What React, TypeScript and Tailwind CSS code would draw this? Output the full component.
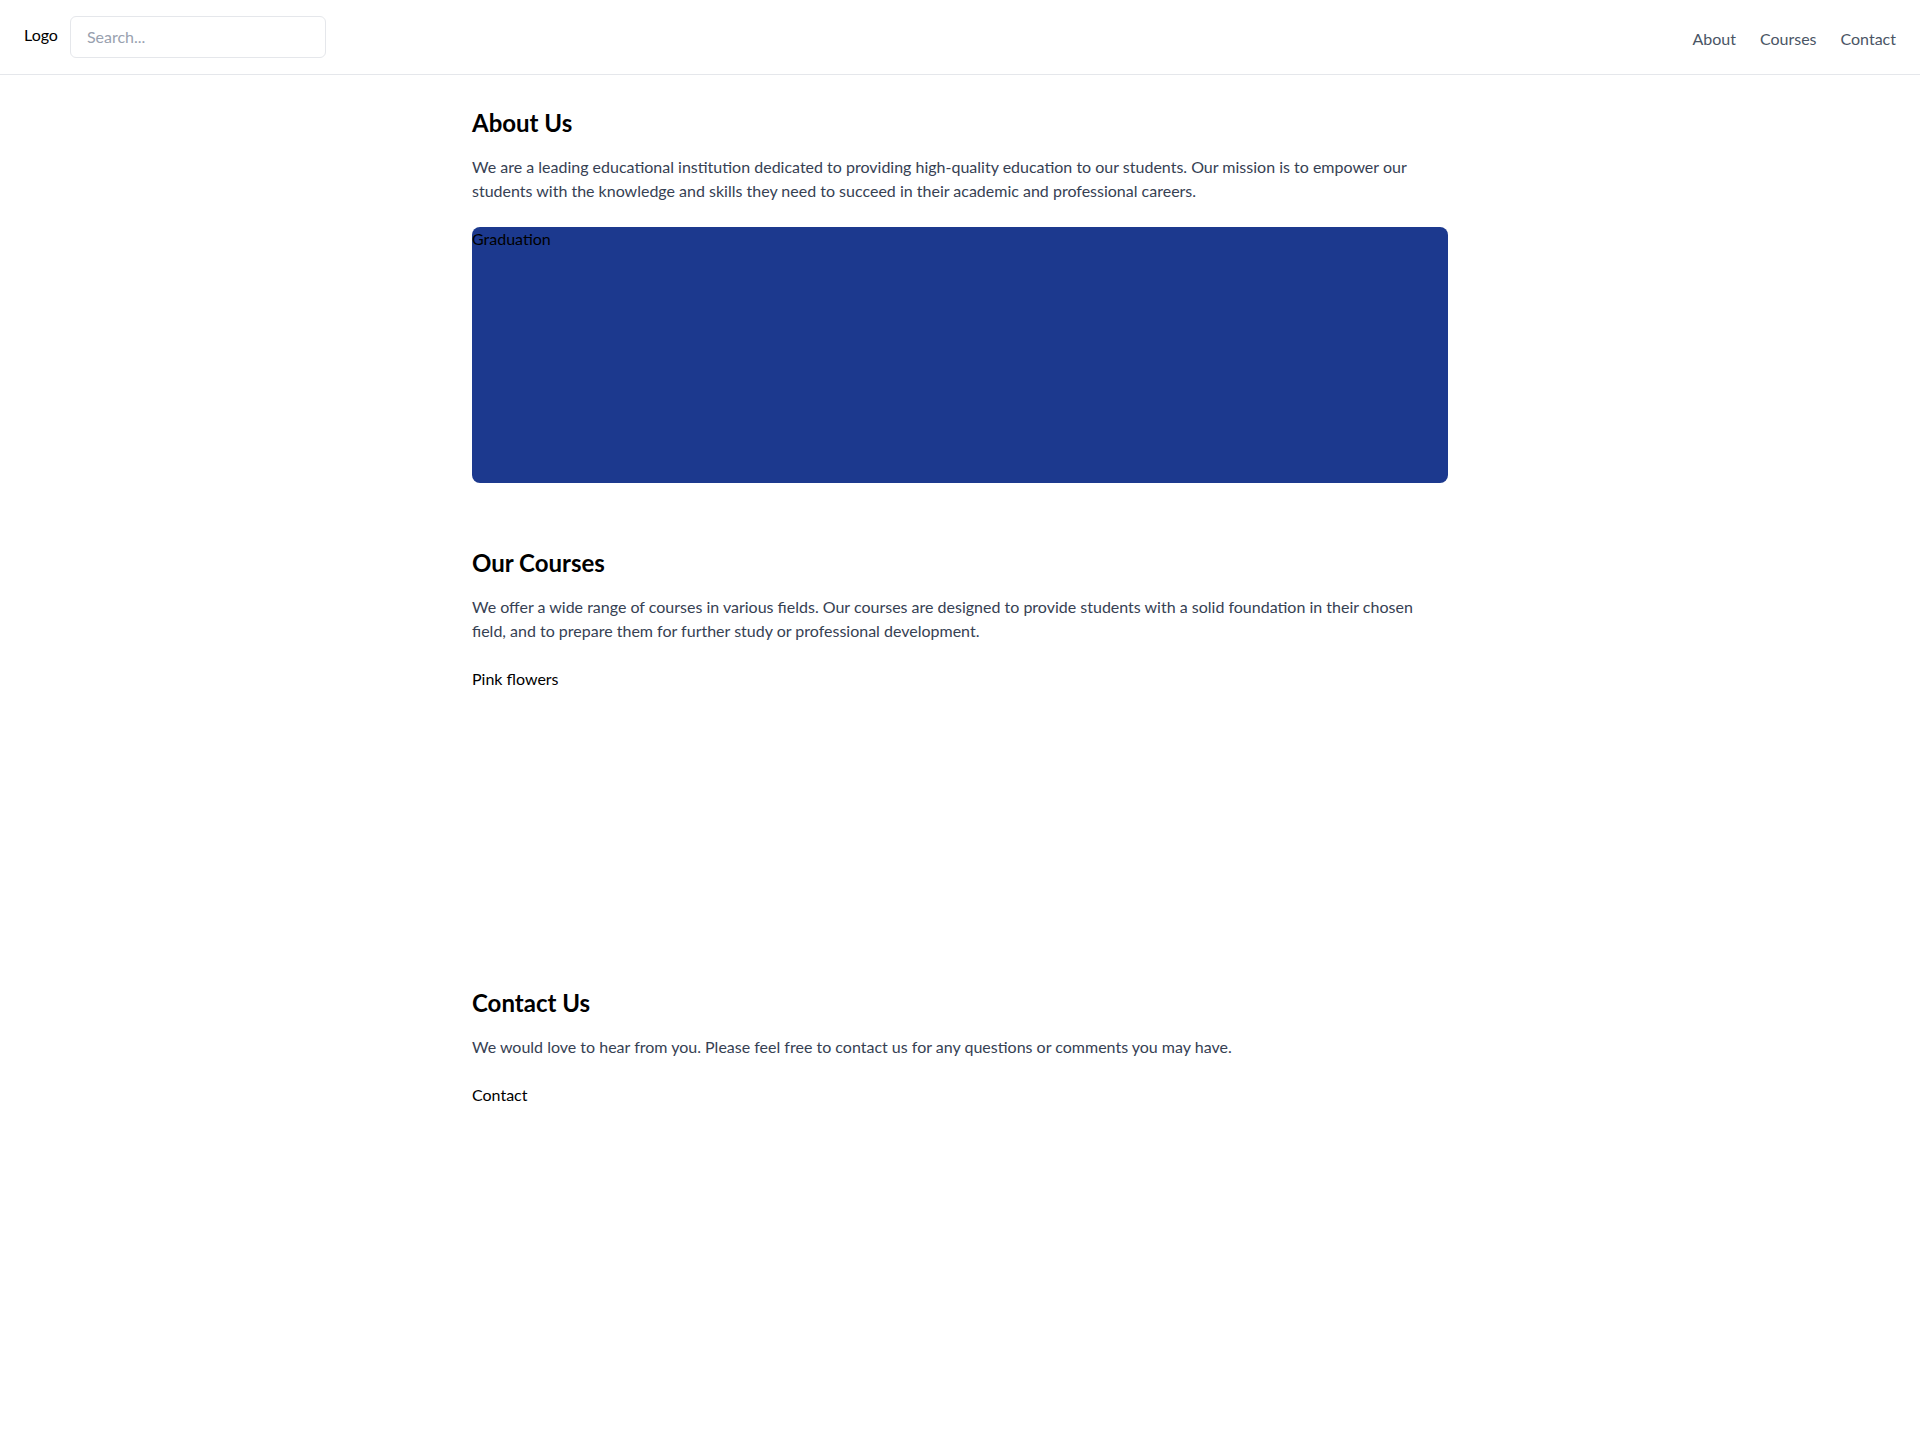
import React from "react"

const sections = [
  {
    id: "about",
    title: "About Us",
    text: "We are a leading educational institution dedicated to providing high-quality education to our students. Our mission is to empower our students with the knowledge and skills they need to succeed in their academic and professional careers.",
    alt: "Graduation",
    bg: "bg-blue-900",
  },
  {
    id: "courses",
    title: "Our Courses",
    text: "We offer a wide range of courses in various fields. Our courses are designed to provide students with a solid foundation in their chosen field, and to prepare them for further study or professional development.",
    alt: "Pink flowers",
    bg: "",
  },
  {
    id: "contact",
    title: "Contact Us",
    text: "We would love to hear from you. Please feel free to contact us for any questions or comments you may have.",
    alt: "Contact",
    bg: "",
  },
]

export default function App() {
  return (
    <div className="min-h-screen bg-white font-['Lato','Noto_Sans',sans-serif] text-black">
      <header className="flex items-center justify-between px-6 py-4 border-b border-gray-200">
        <div className="flex items-center gap-3">
          <span className="mb-1 text-base">Logo</span>
          <input
            type="text"
            placeholder="Search..."
            className="w-64 px-4 py-2 text-base border border-gray-200 rounded-md outline-none placeholder:text-gray-400"
          />
        </div>
        <nav className="flex items-center gap-6 mt-1 text-base text-gray-600">
          <a href="#about">About</a>
          <a href="#courses">Courses</a>
          <a href="#contact">Contact</a>
        </nav>
      </header>

      <main className="max-w-5xl px-6 mx-auto">
        {sections.map((s) => (
          <section key={s.id} id={s.id} className="py-8">
            <h2 className="mb-4 text-2xl font-bold">{s.title}</h2>
            <p className="mb-6 text-base leading-6 text-gray-700">{s.text}</p>
            <div className={`w-full h-64 rounded-lg ${s.bg}`}>
              <span className="text-base leading-6">{s.alt}</span>
            </div>
          </section>
        ))}
      </main>
    </div>
  )
}
